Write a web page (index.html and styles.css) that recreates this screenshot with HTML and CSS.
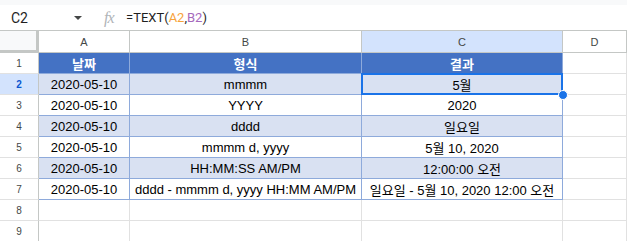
FILE: index.html
```html
<!DOCTYPE html>
<html lang="ko">
<head>
    <meta charset="UTF-8">
    <meta name="viewport" content="width=device-width, initial-scale=1.0">
    <title>TEXT 함수</title>
    <link rel="stylesheet" href="styles.css">
</head>
<body>
    <div class="topstrip"></div>

    <div class="formula-bar">
        <div class="name-box">C2</div>
        <div class="name-arrow"></div>
        <div class="fx">fx</div>
        <div class="formula">=TEXT(<span class="ref-a">A2</span>,<span class="ref-b">B2</span>)</div>
    </div>

    <div class="sheet">
        <!-- 열 머리글 -->
        <div class="corner"></div>
        <div class="col-head">A</div>
        <div class="col-head">B</div>
        <div class="col-head active">C</div>
        <div class="col-head">D</div>

        <!-- 1 -->
        <div class="row-head">1</div>
        <div class="cell th">날짜</div>
        <div class="cell th">형식</div>
        <div class="cell th">결과</div>
        <div class="cell"></div>

        <!-- 2 -->
        <div class="row-head active">2</div>
        <div class="cell tb shade">2020-05-10</div>
        <div class="cell tb shade">mmmm</div>
        <div class="cell tb shade selected">5월<span class="handle"></span></div>
        <div class="cell"></div>

        <!-- 3 -->
        <div class="row-head">3</div>
        <div class="cell tb">2020-05-10</div>
        <div class="cell tb">YYYY</div>
        <div class="cell tb">2020</div>
        <div class="cell"></div>

        <!-- 4 -->
        <div class="row-head">4</div>
        <div class="cell tb shade">2020-05-10</div>
        <div class="cell tb shade">dddd</div>
        <div class="cell tb shade">일요일</div>
        <div class="cell"></div>

        <!-- 5 -->
        <div class="row-head">5</div>
        <div class="cell tb">2020-05-10</div>
        <div class="cell tb">mmmm d, yyyy</div>
        <div class="cell tb">5월 10, 2020</div>
        <div class="cell"></div>

        <!-- 6 -->
        <div class="row-head">6</div>
        <div class="cell tb shade">2020-05-10</div>
        <div class="cell tb shade">HH:MM:SS AM/PM</div>
        <div class="cell tb shade">12:00:00 오전</div>
        <div class="cell"></div>

        <!-- 7 -->
        <div class="row-head">7</div>
        <div class="cell tb">2020-05-10</div>
        <div class="cell tb">dddd - mmmm d, yyyy HH:MM AM/PM</div>
        <div class="cell tb">일요일 - 5월 10, 2020 12:00 오전</div>
        <div class="cell"></div>

        <!-- 8 -->
        <div class="row-head">8</div>
        <div class="cell"></div>
        <div class="cell"></div>
        <div class="cell"></div>
        <div class="cell"></div>

        <!-- 9 -->
        <div class="row-head">9</div>
        <div class="cell"></div>
        <div class="cell"></div>
        <div class="cell"></div>
        <div class="cell"></div>
    </div>
</body>
</html>
```

FILE: styles.css
```css
body {
    margin: 0;
    background-color: #ffffff;
    font-family: 'Liberation Sans', Arial, 'Noto Sans CJK KR', sans-serif;
    color: #000000;
    overflow: hidden;
}
.topstrip {
    height: 5px;
    background-color: #f8f9fa;
}
.formula-bar {
    height: 25px;
    display: flex;
    align-items: center;
    border-bottom: 1px solid #c4c7c5;
    font-size: 13px;
}
.name-box {
    width: 63px;
    padding-left: 11px;
    font-family: Roboto, 'Liberation Sans', sans-serif;
    font-size: 14px;
    color: #1f1f1f;
}
.name-arrow {
    width: 0;
    height: 0;
    border-left: 4px solid transparent;
    border-right: 4px solid transparent;
    border-top: 4px solid #444746;
    margin-top: 1px;
}
.fx {
    margin-left: 22px;
    width: 22px;
    font-family: 'Liberation Serif', serif;
    font-style: italic;
    font-size: 16px;
    color: #b0b4b8;
    letter-spacing: -1px;
}
.formula {
    font-family: Roboto, 'Liberation Sans', sans-serif;
    font-size: 13px;
    color: #1f1f1f;
}
.ref-a {
    color: #f7a33b;
}
.ref-b {
    color: #a569bd;
}
.sheet {
    display: grid;
    grid-template-columns: 39px 91px 232px 201px 1fr;
    grid-template-rows: 22px repeat(9, 21px);
    font-size: 13px;
}
.sheet > div {
    box-sizing: border-box;
    display: flex;
    align-items: center;
    justify-content: center;
    white-space: nowrap;
    overflow: hidden;
}
.corner {
    background-color: #f8f9fa;
    border-right: 3px solid #c4c7c5;
    border-bottom: 3px solid #c4c7c5;
}
.col-head {
    font-size: 11px;
    color: #444746;
    border-right: 1px solid #c4c7c5;
    border-bottom: 1px solid #c4c7c5;
    padding-top: 1px;
}
.col-head.active {
    background-color: #d3e3fd;
}
.row-head {
    font-size: 10px;
    color: #444746;
    border-right: 1px solid #c4c7c5;
    border-bottom: 1px solid #e1e1e1;
}
.row-head.active {
    background-color: #d3e3fd;
    font-weight: bold;
    color: #0b57d0;
}
.cell {
    border-right: 1px solid #e1e1e1;
    border-bottom: 1px solid #e1e1e1;
}
.th {
    background-color: #4472c4;
    color: #ffffff;
    font-weight: bold;
    border-right-color: #8eaadb;
    border-bottom-color: #8eaadb;
}
.tb {
    border-right-color: #8eaadb;
    border-bottom-color: #8eaadb;
}
.shade {
    background-color: #d9e1f2;
}
.sheet > .selected {
    position: relative;
    overflow: visible;
}
.selected::after {
    content: '';
    position: absolute;
    left: -1px;
    top: -1px;
    right: -1px;
    bottom: -1px;
    border: 2px solid #1a73e8;
}
.handle {
    position: absolute;
    right: -6px;
    bottom: -6px;
    width: 8px;
    height: 8px;
    border-radius: 50%;
    background-color: #1a73e8;
    border: 1px solid #ffffff;
    z-index: 2;
}
```
